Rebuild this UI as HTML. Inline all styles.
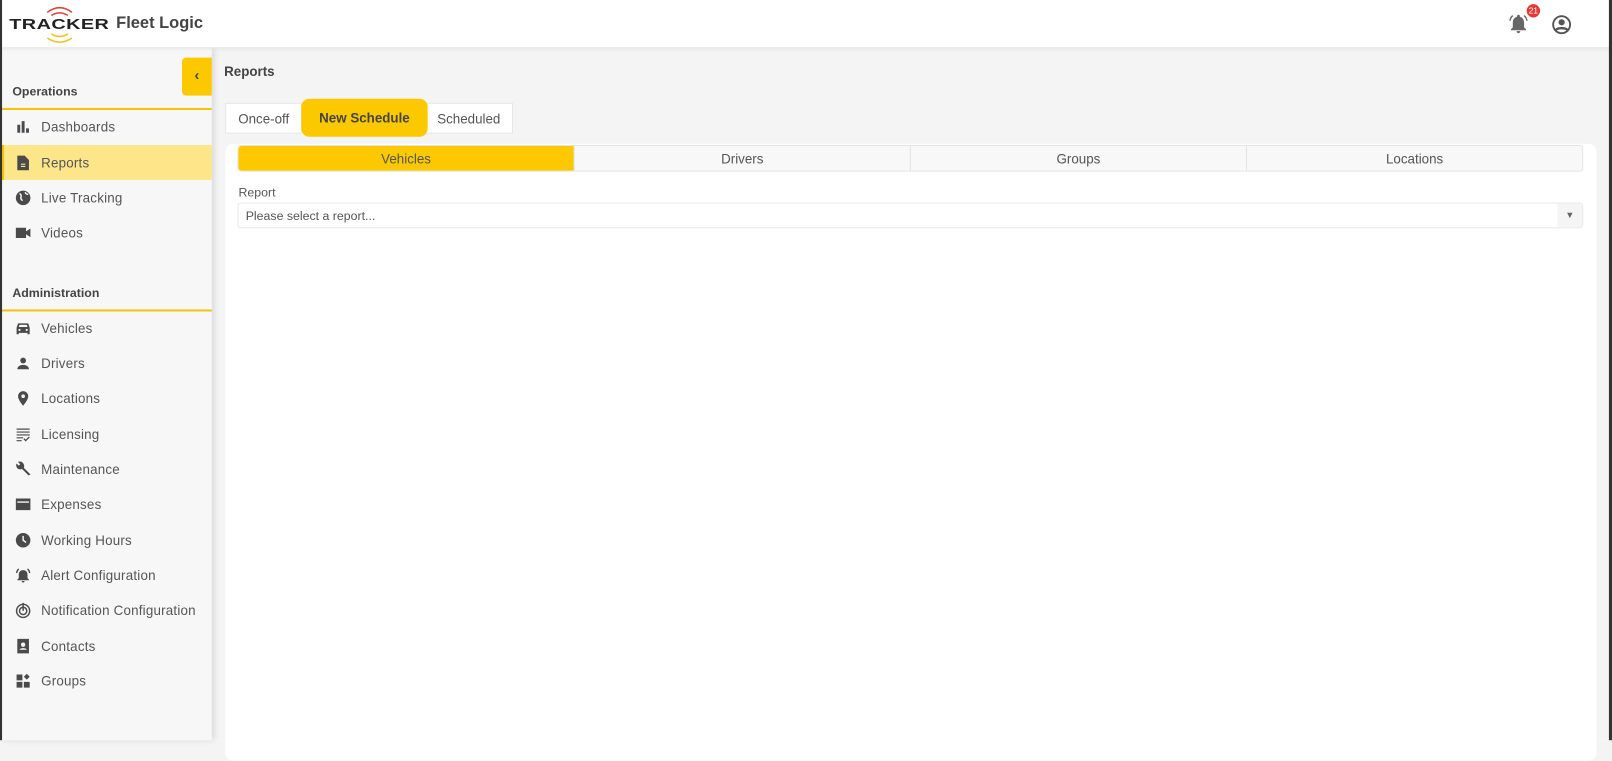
<!DOCTYPE html>
<html><head><style>
*{box-sizing:border-box;margin:0;padding:0}
html,body{width:1612px;height:737px;overflow:hidden;background:#f4f4f4}
#w{position:absolute;left:0;top:0;width:1568px;height:720px;transform:scale(1.02806);transform-origin:0 0;font-family:"Liberation Sans",sans-serif;color:#555;background:#fff}
.frameL{position:absolute;left:0;top:0;width:2px;height:720px;background:#333;z-index:9}
.frameR{position:absolute;right:0;top:0;width:3px;height:720px;background:#333;z-index:9}
.top{position:absolute;left:0;top:0;width:1568px;height:47px;background:#fff;border-bottom:1px solid #e4e4e4;z-index:5;box-shadow:0 1px 3px rgba(0,0,0,.06)}
.side{position:absolute;left:0;top:47px;width:206px;height:673px;background:#f7f7f7;box-shadow:2px 0 6px rgba(0,0,0,.12);z-index:3}
.main{position:absolute;left:206px;top:47px;width:1360px;height:673px;background:#f4f4f4}
.sec{position:absolute;left:12px;font-size:12px;font-weight:bold;color:#444}
.line{position:absolute;left:0;width:206px;height:2px;background:#f1c40f}
.item{position:absolute;left:0;width:206px;height:34px;display:flex;align-items:center;font-size:13px;color:#555;letter-spacing:.2px}
.item svg{position:absolute;left:14px;width:17px;height:17px;fill:#4a4a4a}
.item span{position:absolute;left:40px}
.act{background:#fde68a;border-left:4px solid #f5c400}
.tab{position:absolute;top:100px;height:30px;font-size:13px;display:flex;align-items:center;justify-content:center;background:#fff;border:1px solid #e6e6e6;color:#555}
</style></head><body><div id="w">
<div class="frameL"></div><div class="frameR"></div>
<div class="top">
 <svg style="position:absolute;left:40px;top:4px" width="36" height="38" viewBox="0 0 36 38"><path d="M6 8 Q18 -1 30 8" stroke="#d9463a" stroke-width="1.5" fill="none"/><path d="M10 11 Q18 6 26 11" stroke="#d9463a" stroke-width="1.5" fill="none"/><path d="M10 29 Q18 34 26 29" stroke="#f0c020" stroke-width="1.5" fill="none"/><path d="M6 33 Q18 41 30 33" stroke="#f0c020" stroke-width="1.5" fill="none"/></svg>
 <div style="position:absolute;left:9px;top:16px;font-size:14px;font-weight:900;letter-spacing:.3px;color:#222;transform:scaleX(1.38);transform-origin:left;line-height:14px">TRACKER</div>
 <div style="position:absolute;left:113px;top:14px;font-size:16px;font-weight:bold;color:#444">Fleet Logic</div>
 <svg style="position:absolute;left:1466px;top:12px" width="22" height="22" viewBox="0 0 24 24" fill="#666"><path d="M12 22a2 2 0 0 0 2-2h-4a2 2 0 0 0 2 2zm6-6v-5c0-3-1.6-5.6-4.5-6.3V4a1.5 1.5 0 0 0-3 0v.7C7.6 5.4 6 8 6 11v5l-2 2v1h16v-1l-2-2z"/><path d="M3 9c.3-2.3 1.4-4.3 3-5.6M21 9c-.3-2.3-1.4-4.3-3-5.6" stroke="#666" stroke-width="1.5" fill="none"/></svg>
 <div style="position:absolute;left:1485px;top:4px;width:13px;height:13px;border-radius:50%;background:#e53935;color:#fff;font-size:8px;text-align:center;line-height:13px">21</div>
 <svg style="position:absolute;left:1508px;top:13px" width="22" height="22" viewBox="0 0 24 24"><circle cx="12" cy="12" r="9" stroke="#555" stroke-width="2" fill="none"/><circle cx="12" cy="9.5" r="3.3" fill="#555"/><path d="M5.5 18c2-3 11-3 13 0" stroke="#555" stroke-width="2.5" fill="none"/></svg>
</div>
<div class="main">
 <div style="position:absolute;left:12px;top:15px;font-size:13px;font-weight:bold;color:#444">Reports</div>
 <div style="position:absolute;left:13px;top:93px;width:1334px;height:600px;background:#fff;border-radius:8px"></div>
</div>
<div class="tab" style="left:219px;width:75px">Once-off</div>
<div class="tab" style="left:413px;width:86px">Scheduled</div>
<div class="tab" style="left:293px;top:96px;height:37px;width:123px;background:#fcc800;border:none;border-radius:8px;font-weight:bold;color:#444">New Schedule</div>
<div style="position:absolute;left:231px;top:141px;width:1309px;height:26px;border:1px solid #e4e4e4;border-radius:3px;background:#f8f8f8;display:flex;font-size:13px;color:#555">
 <div style="flex:1;background:#fcc800;display:flex;align-items:center;justify-content:center;border-radius:3px 0 0 3px">Vehicles</div>
 <div style="flex:1;display:flex;align-items:center;justify-content:center;border-left:1px solid #e4e4e4">Drivers</div>
 <div style="flex:1;display:flex;align-items:center;justify-content:center;border-left:1px solid #e4e4e4">Groups</div>
 <div style="flex:1;display:flex;align-items:center;justify-content:center;border-left:1px solid #e4e4e4">Locations</div>
</div>
<div style="position:absolute;left:232px;top:180px;font-size:12px;color:#555">Report</div>
<div style="position:absolute;left:231px;top:197px;width:1309px;height:25px;border:1px solid #e8e8e8;border-radius:3px;font-size:12px;color:#555;padding:5px 7px">Please select a report...<span style="position:absolute;right:0;top:0;width:24px;height:23px;background:#f5f5f5;text-align:center;line-height:23px;font-size:9px;color:#666">▼</span></div>
<div class="side">
 <div style="position:absolute;left:177px;top:9px;width:29px;height:37px;background:#fcc800;border-radius:4px 0 0 4px;text-align:center;line-height:35px;font-size:14px;color:#444;font-weight:bold">‹</div>
 <div class="sec" style="top:35px">Operations</div>
 <div class="line" style="top:58px"></div>
 <div class="item" style="top:59px"><svg viewBox="0 0 24 24"><path d="M4 9h4v11H4zM10 4h4v16h-4zM16 14h4v6h-4z"/></svg><span>Dashboards</span></div>
 <div class="item act" style="top:94px"><svg viewBox="0 0 24 24" style="left:10px"><path d="M6 2h8l6 6v14H4V2zm3 11h6v1.5H9zm0 3h6v1.5H9z" fill-rule="evenodd"/></svg><span style="left:36px">Reports</span></div>
 <div class="item" style="top:128px"><svg viewBox="0 0 24 24"><circle cx="12" cy="12" r="10"/><path d="M7 6c2 1 3 3 2 5s1 3 2 5M15 4c0 2 2 3 4 3" stroke="#f7f7f7" stroke-width="2" fill="none"/></svg><span>Live Tracking</span></div>
 <div class="item" style="top:162px"><svg viewBox="0 0 24 24"><path d="M2 5h14v14H2zM16 10l6-4v12l-6-4z"/></svg><span>Videos</span></div>
 <div class="sec" style="top:231px">Administration</div>
 <div class="line" style="top:254px"></div>
 <div class="item" style="top:255px"><svg viewBox="0 0 24 24"><path d="M5 5h14l2 6v9h-3v-2H6v2H3v-9z"/><path d="M6 10l1-3h10l1 3z" fill="#f7f7f7"/><circle cx="7" cy="14" r="1.5" fill="#f7f7f7"/><circle cx="17" cy="14" r="1.5" fill="#f7f7f7"/></svg><span>Vehicles</span></div>
 <div class="item" style="top:289px"><svg viewBox="0 0 24 24"><circle cx="12" cy="8" r="4"/><path d="M4 20c0-4 4-6 8-6s8 2 8 6z"/></svg><span>Drivers</span></div>
 <div class="item" style="top:323px"><svg viewBox="0 0 24 24"><path d="M12 2a7 7 0 0 0-7 7c0 5 7 13 7 13s7-8 7-13a7 7 0 0 0-7-7zm0 9.5a2.5 2.5 0 1 1 0-5 2.5 2.5 0 0 1 0 5z"/></svg><span>Locations</span></div>
 <div class="item" style="top:358px"><svg viewBox="0 0 24 24"><path d="M3 4h18v1.6H3zM3 8h18v1.6H3zM3 12h18v1.6H3zM3 16h9v1.6H3zM3 20h7v1.5H3z"/><path d="M13 18l2.5 2.5 5-5" stroke="#4a4a4a" stroke-width="1.8" fill="none"/></svg><span>Licensing</span></div>
 <div class="item" style="top:392px"><svg viewBox="0 0 24 24"><path d="M22 19l-9-9c1-2 .5-5-1.5-7S6.5 1 5 2l3 3-2 2-3-3C2 5.5 2.5 9 4 10.5s4.5 2 6.5 1l9 9z"/></svg><span>Maintenance</span></div>
 <div class="item" style="top:426px"><svg viewBox="0 0 24 24"><path d="M2 4h20v16H2zm2 4v2h16V8z" fill-rule="evenodd"/></svg><span>Expenses</span></div>
 <div class="item" style="top:461px"><svg viewBox="0 0 24 24"><circle cx="12" cy="12" r="10"/><path d="M12 6v6l4 3" stroke="#f7f7f7" stroke-width="2" fill="none"/></svg><span>Working Hours</span></div>
 <div class="item" style="top:495px"><svg viewBox="0 0 24 24"><path d="M12 22a2 2 0 0 0 2-2h-4a2 2 0 0 0 2 2zm6-6v-5c0-3-2-6-6-6s-6 3-6 6v5l-2 2v1h16v-1z"/><path d="M3 9c.3-2.3 1.4-4.3 3-5.6M21 9c-.3-2.3-1.4-4.3-3-5.6" stroke="#4a4a4a" stroke-width="1.8" fill="none"/></svg><span>Alert Configuration</span></div>
 <div class="item" style="top:529px"><svg viewBox="0 0 24 24"><circle cx="12" cy="13" r="9" stroke="#4a4a4a" stroke-width="2" fill="none"/><circle cx="12" cy="13" r="5" stroke="#4a4a4a" stroke-width="2" fill="none"/><path d="M11 2h2v11h-2z"/></svg><span>Notification Configuration</span></div>
 <div class="item" style="top:564px"><svg viewBox="0 0 24 24"><path d="M4 2h16v20H4z"/><circle cx="12" cy="10" r="3" fill="#f7f7f7"/><path d="M7 17c1-3 9-3 10 0z" fill="#f7f7f7"/></svg><span>Contacts</span></div>
 <div class="item" style="top:598px"><svg viewBox="0 0 24 24"><path d="M3 3h8v8H3zM3 13h8v8H3zM13 13h8v8h-8zM17 2l4 4-4 4-4-4z"/></svg><span>Groups</span></div>
</div>
</div></body></html>
